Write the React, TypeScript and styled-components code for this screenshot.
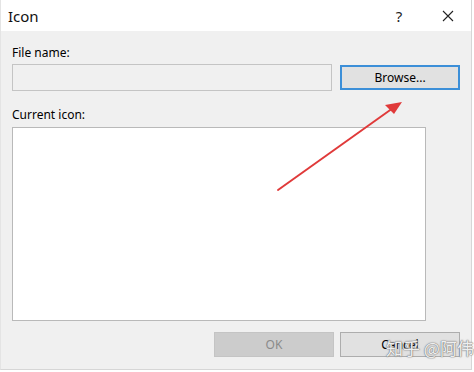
import styled, { createGlobalStyle } from "styled-components";

const GlobalStyle = createGlobalStyle`
  html, body {
    margin: 0;
    padding: 0;
    background: #ffffff;
  }
  body {
    font-family: "Noto Sans", "Open Sans", sans-serif;
  }
`;

const Window = styled.div`
  position: relative;
  width: 472px;
  height: 370px;
  box-sizing: border-box;
  border-right: 1px solid #d6d6d6;
  border-bottom: 1px solid #d6d6d6;
  border-left: 1px solid #e4e4e4;
  background: #f0f0f0;
  display: flex;
  flex-direction: column;
`;

const TitleBar = styled.div`
  height: 31px;
  flex-shrink: 0;
  background: #ffffff;
  display: flex;
  align-items: center;
  padding-left: 7px;
  font-size: 15px;
  color: #111;
`;

const Title = styled.div`
  flex: 1;
`;

const TitleButton = styled.div<{ $w: number }>`
  width: ${(p) => p.$w}px;
  height: 31px;
  display: flex;
  align-items: center;
  justify-content: center;
  color: #222;
  font-size: 15px;
`;

const Body = styled.div`
  flex: 1;
  padding: 14px 11px 0 11px;
  display: flex;
  flex-direction: column;
  font-size: 12px;
  color: #000;
`;

const Label = styled.div`
  height: 16px;
  line-height: 16px;
  margin-bottom: 3px;
`;

const FileRow = styled.div`
  display: flex;
  align-items: center;
  gap: 8px;
  margin-bottom: 16px;
`;

const TextBox = styled.div`
  width: 321px;
  height: 27px;
  box-sizing: border-box;
  border: 1px solid #c4c4c4;
  background: #f0f0f0;
`;

const Button = styled.div<{ $primary?: boolean; $disabled?: boolean }>`
  width: 120px;
  height: 25px;
  box-sizing: border-box;
  display: flex;
  align-items: center;
  justify-content: center;
  font-size: 12px;
  background: ${(p) => (p.$disabled ? "#cccccc" : "#e1e1e1")};
  border: ${(p) =>
    p.$primary ? "2px solid #3c8fd8" : p.$disabled ? "1px solid #c4c4c4" : "1px solid #adadad"};
  color: ${(p) => (p.$disabled ? "#8a8a8a" : "#000")};
`;

const IconList = styled.div`
  width: 414px;
  height: 194px;
  margin-top: 1px;
  box-sizing: border-box;
  border: 1px solid #b9b9b9;
  background: #ffffff;
`;

const Footer = styled.div`
  display: flex;
  justify-content: flex-end;
  gap: 6px;
  margin-top: 11px;
`;

const Watermark = styled.div`
  position: absolute;
  left: 385px;
  top: 335px;
  font-family: "Noto Sans CJK SC", sans-serif;
  font-size: 17px;
  color: rgba(255, 255, 255, 0.9);
  text-shadow: 0 0 1px #7a7a7a, 0 0 1px #7a7a7a, 0 0 2px rgba(120, 120, 120, 0.6);
  white-space: nowrap;
`;

const Arrow = styled.svg`
  position: absolute;
  left: 0;
  top: 0;
  pointer-events: none;
`;

export default function App() {
  return (
    <>
      <GlobalStyle />
      <Window>
        <TitleBar>
          <Title>Icon</Title>
          <TitleButton $w={52}>?</TitleButton>
          <TitleButton $w={46}>
            <svg width="12" height="12" viewBox="0 0 12 12">
              <path d="M1 1 L11 11 M11 1 L1 11" stroke="#222" strokeWidth="1.1" />
            </svg>
          </TitleButton>
        </TitleBar>
        <Body>
          <Label>File name:</Label>
          <FileRow>
            <TextBox />
            <Button $primary>Browse...</Button>
          </FileRow>
          <Label>Current icon:</Label>
          <IconList />
          <Footer>
            <Button $disabled>OK</Button>
            <Button>Cancel</Button>
          </Footer>
        </Body>
        <Arrow width="474" height="372" viewBox="0 0 474 372">
          <path d="M277 190 L392 108" stroke="#e03a3a" strokeWidth="2" strokeLinecap="round" />
          <path d="M401 102 L384 105 L393 114 Z" fill="#e03a3a" />
        </Arrow>
        <Watermark>知乎 @阿伟</Watermark>
      </Window>
    </>
  );
}
